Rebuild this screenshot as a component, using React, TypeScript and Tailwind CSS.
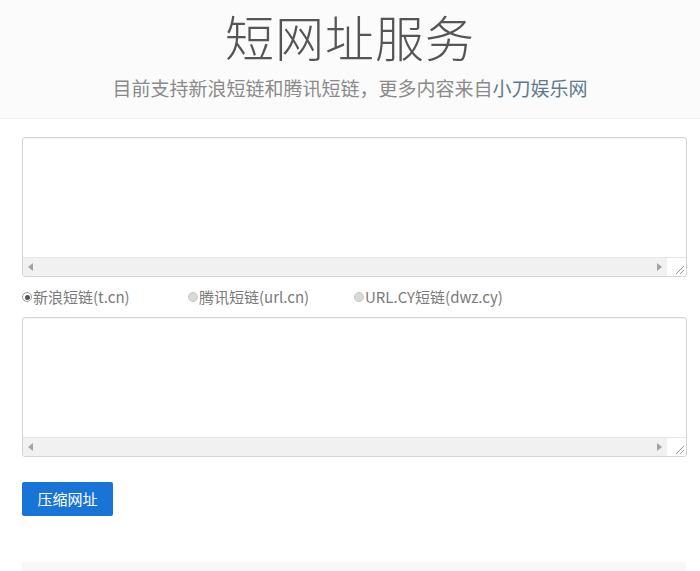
import React, { useState } from "react";

const cjk = "font-['Microsoft_YaHei','Noto_Sans_CJK_SC','Noto_Sans',sans-serif]";

// Fake textarea with the classic horizontal scrollbar + resize grip along the bottom.
function ScrollBox() {
  return (
    <div className="flex h-[140px] w-full flex-col overflow-hidden rounded-[3px] border border-[#d4d4d4] bg-white shadow-[inset_0_1px_1px_rgba(0,0,0,0.05)]">
      <div className="flex-1" />
      <div className="flex h-[19px] items-stretch border-t border-[#e6e6e6]">
        <div className="flex flex-1 items-center justify-between bg-[#f1f1f1] px-[5px]">
          <span className="block h-0 w-0 border-y-[4px] border-r-[5px] border-y-transparent border-r-[#a3a3a3]" />
          <span className="block h-0 w-0 border-y-[4px] border-l-[5px] border-y-transparent border-l-[#a3a3a3]" />
        </div>
        <div className="relative w-[19px] bg-white">
          <svg className="absolute bottom-[1px] right-[1px]" width="12" height="12" viewBox="0 0 12 12">
            <path d="M11 3 L3 11 M11 7 L7 11" stroke="#9a9a9a" strokeWidth="1" fill="none" />
          </svg>
        </div>
      </div>
    </div>
  );
}

function Radio({ label, checked, onPick }: { label: string; checked: boolean; onPick: () => void }) {
  return (
    <label className="flex w-[166px] cursor-pointer items-center" onClick={onPick}>
      <span
        className={
          checked
            ? "mr-[1px] flex h-[10px] w-[10px] items-center justify-center rounded-full border border-[#9d9d9d] bg-white"
            : "mr-[1px] block h-[10px] w-[10px] rounded-full border border-[#c6c6c6] bg-[#d9d9d9]"
        }
      >
        {checked ? <span className="block h-[5px] w-[5px] rounded-full bg-[#555]" /> : null}
      </span>
      <span className="text-[15px] text-[#7a7a7a]">{label}</span>
    </label>
  );
}

export default function App() {
  const [kind, setKind] = useState("sina");

  return (
    <div className={`min-h-[571px] w-[700px] bg-white ${cjk}`}>
      <header className="flex h-[119px] flex-col items-center border-b border-[#efefef] bg-[#fbfbfb]">
        <h1 className="mt-[6px] text-[49px] font-light leading-[60px] tracking-[1px] text-[#555]">短网址服务</h1>
        <p className="mt-[10px] text-[19px] leading-[24px] text-[#8a8a8a]">
          目前支持新浪短链和腾讯短链，更多内容来自<a className="text-[#607a8c]">小刀娱乐网</a>
        </p>
      </header>

      <main className="ml-[22px] w-[665px] pt-[18px]">
        <ScrollBox />

        <div className="flex h-[40px] items-center">
          <Radio label="新浪短链(t.cn)" checked={kind === "sina"} onPick={() => setKind("sina")} />
          <Radio label="腾讯短链(url.cn)" checked={kind === "qq"} onPick={() => setKind("qq")} />
          <Radio label="URL.CY短链(dwz.cy)" checked={kind === "cy"} onPick={() => setKind("cy")} />
        </div>

        <ScrollBox />

        <button className="mt-[25px] h-[34px] w-[91px] rounded-[2px] bg-[#1874d7] text-[15px] text-white">
          压缩网址
        </button>

        <div className="mt-[46px] h-[10px] w-[664px] bg-[#f7f7f7]" />
      </main>
    </div>
  );
}
